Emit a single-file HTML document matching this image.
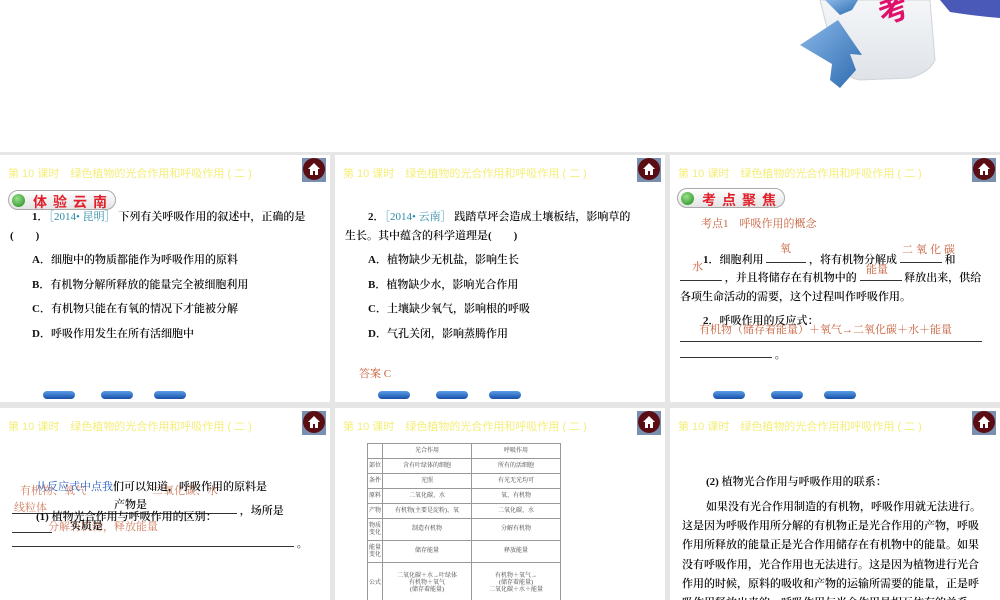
<!DOCTYPE html>
<html><head><meta charset="utf-8"><style>
body{margin:0;width:1000px;height:600px;position:relative;overflow:hidden;background:#fff;font-family:"Liberation Serif","Noto Serif CJK SC","Noto Sans CJK SC",serif;}
.bg{position:absolute;left:0;top:152px;width:1000px;height:448px;background:#e6e6e6;}
.p{position:absolute;background:#fff;overflow:hidden;}
.t{position:absolute;left:8px;top:10px;font:11px "Liberation Sans","Noto Sans CJK SC",sans-serif;color:#f4ee7a;white-space:nowrap;}
.h{position:absolute;right:4px;top:3px;width:24px;height:24px;background:#7a8fb0;}
.h:before{content:"";position:absolute;left:1px;top:0;width:22px;height:22px;border-radius:50%;background:#5a0e14;}
.h svg{position:absolute;left:5px;top:4px;}
.x{position:absolute;font-size:11px;color:#111;white-space:nowrap;font-weight:600;}
.r{color:#c8603c;font-weight:normal;}
.c{color:#2a8aa8;font-weight:normal;}
.nav{position:absolute;top:236px;width:32px;height:8px;border-radius:4px;background:linear-gradient(#5a9ee8,#1a4fa8);}
.badge{position:absolute;left:8px;top:35px;width:106px;height:18px;border:1px solid #aaa;border-radius:10px;background:linear-gradient(#fff,#e4e4e4);}
.badge i{position:absolute;left:3px;top:3px;width:13px;height:13px;border-radius:50%;background:radial-gradient(circle at 40% 35%,#9be08a,#1b8a1b);}
.badge b{position:absolute;left:24px;top:1px;font:bold 14px "Noto Sans CJK SC",sans-serif;color:#e0202a;letter-spacing:6px;}
.u{display:inline-block;border-bottom:1px solid #333;height:10px;vertical-align:baseline;}
table{border-collapse:collapse;font-size:6px;color:#444;table-layout:fixed;}
td{border:1px solid #999;text-align:center;padding:0;height:14px;line-height:7px;overflow:hidden;}
</style></head><body>
<svg style="position:absolute;left:760px;top:0" width="240" height="110">
<defs><linearGradient id="g" x1="0" y1="0" x2="0" y2="1"><stop offset="0" stop-color="#f4f6f8"/><stop offset="1" stop-color="#dfe3e8"/></linearGradient>
<linearGradient id="b" x1="0" y1="0" x2="1" y2="1"><stop offset="0" stop-color="#8ab8e8"/><stop offset="1" stop-color="#2e6bb0"/></linearGradient></defs>
<path d="M60 0 L170 0 L175 60 Q170 72 150 78 L100 80 Q85 78 75 60 Z" fill="url(#g)" stroke="#d0d4d8"/>
<path d="M65 0 L98 0 L92 10 L80 15 Z" fill="url(#b)"/>
<path d="M180 0 L240 0 L240 18 Q215 16 190 12 Z" fill="#4a58b8"/>
<path d="M40 45 L78 20 L102 55 L90 54 L96 70 L80 88 L70 80 L72 64 Z" fill="url(#b)"/>
<text x="118" y="22" font-family="Noto Sans CJK SC,sans-serif" font-weight="bold" font-size="30" fill="#e0106a" transform="rotate(-20 128 10)">考</text>
</svg>
<div class="bg"></div>

<div class="p" style="left:0;top:155px;width:330px;height:247px">
<div class="t">第 10 课时　绿色植物的光合作用和呼吸作用 ( 二 )</div>
<div class="h"><svg width="14" height="14" viewBox="0 0 14 14"><path d="M7 1 L1 7 H3 V13 H6 V9 H8 V13 H11 V7 H13 Z" fill="#fff"/></svg></div>
<div class="badge"><i></i><b>体验云南</b></div>
<div class="x" style="left:32px;top:53px">1．<span class="c">［2014• 昆明］</span> 下列有关呼吸作用的叙述中，正确的是</div>
<div class="x" style="left:10px;top:72px">(　　)</div>
<div class="x" style="left:32px;top:96px">A．细胞中的物质都能作为呼吸作用的原料</div>
<div class="x" style="left:32px;top:121px">B．有机物分解所释放的能量完全被细胞利用</div>
<div class="x" style="left:32px;top:145px">C．有机物只能在有氧的情况下才能被分解</div>
<div class="x" style="left:32px;top:170px">D．呼吸作用发生在所有活细胞中</div>
<div class="nav" style="left:43px"></div><div class="nav" style="left:101px"></div><div class="nav" style="left:154px"></div>
</div>

<div class="p" style="left:335px;top:155px;width:330px;height:247px">
<div class="t">第 10 课时　绿色植物的光合作用和呼吸作用 ( 二 )</div>
<div class="h"><svg width="14" height="14" viewBox="0 0 14 14"><path d="M7 1 L1 7 H3 V13 H6 V9 H8 V13 H11 V7 H13 Z" fill="#fff"/></svg></div>
<div class="x" style="left:33px;top:53px"><b>2</b>．<span class="c">［2014• 云南］</span> 践踏草坪会造成土壤板结，影响草的</div>
<div class="x" style="left:10px;top:72px">生长。其中蕴含的科学道理是(　　)</div>
<div class="x" style="left:33px;top:96px">A．植物缺少无机盐，影响生长</div>
<div class="x" style="left:33px;top:121px">B．植物缺少水，影响光合作用</div>
<div class="x" style="left:33px;top:145px">C．土壤缺少氧气，影响根的呼吸</div>
<div class="x" style="left:33px;top:170px">D．气孔关闭，影响蒸腾作用</div>
<div class="x r" style="left:24px;top:210px">答案 C</div>
<div class="nav" style="left:43px"></div><div class="nav" style="left:101px"></div><div class="nav" style="left:154px"></div>
</div>

<div class="p" style="left:670px;top:155px;width:330px;height:247px">
<div class="t">第 10 课时　绿色植物的光合作用和呼吸作用 ( 二 )</div>
<div class="h"><svg width="14" height="14" viewBox="0 0 14 14"><path d="M7 1 L1 7 H3 V13 H6 V9 H8 V13 H11 V7 H13 Z" fill="#fff"/></svg></div>
<div class="badge" style="left:7px;top:33px"><i></i><b>考点聚焦</b></div>
<div class="x r" style="left:31px;top:60px">考点1　呼吸作用的概念</div>
<div class="x r" style="left:110px;top:85px">氧</div>
<div class="x r" style="left:232px;top:86px;letter-spacing:3px">二氧化碳</div>
<div class="x" style="left:33px;top:96px">1．细胞利用 <span class="u" style="width:40px"></span> ，将有机物分解成 <span class="u" style="width:42px"></span> 和</div>
<div class="x r" style="left:22px;top:103px">水</div>
<div class="x r" style="left:196px;top:106px">能量</div>
<div class="x" style="left:10px;top:114px"><span class="u" style="width:42px"></span> ，并且将储存在有机物中的 <span class="u" style="width:42px"></span> 释放出来，供给</div>
<div class="x" style="left:10px;top:133px">各项生命活动的需要，这个过程叫作呼吸作用。</div>
<div class="x" style="left:33px;top:157px">2．呼吸作用的反应式：</div>
<div class="x r" style="left:29px;top:166px">有机物（储存着能量）＋氧气→二氧化碳＋水＋能量</div>
<div style="position:absolute;left:10px;top:186px;width:302px;border-top:1px solid #333"></div>
<div class="x" style="left:10px;top:191px"><span class="u" style="width:92px"></span> 。</div>
<div class="nav" style="left:43px"></div><div class="nav" style="left:101px"></div><div class="nav" style="left:154px"></div>
</div>

<div class="p" style="left:0;top:408px;width:330px;height:192px">
<div class="t">第 10 课时　绿色植物的光合作用和呼吸作用 ( 二 )</div>
<div class="h"><svg width="14" height="14" viewBox="0 0 14 14"><path d="M7 1 L1 7 H3 V13 H6 V9 H8 V13 H11 V7 H13 Z" fill="#fff"/></svg></div>
<div class="x r" style="left:20px;top:74px;opacity:.8">有机物、氧气　　　　　　二氧化碳、水</div>
<div class="x" style="left:36px;top:70px"><span style="color:#2a60c0;font-weight:normal">从反应式中点我</span>们可以知道，呼吸作用的原料是</div>
<div class="x r" style="left:14px;top:91px;opacity:.8">线粒体</div>
<div class="x" style="left:114px;top:88px">产物是</div>
<div class="x" style="left:12px;top:94px"><span class="u" style="width:225px"></span> ，场所是</div>
<div class="x" style="left:36px;top:100px">(1) 植物光合作用与呼吸作用的区别：</div>
<div class="x r" style="left:48px;top:110px;opacity:.8">分解有机物，释放能量</div>
<div class="x" style="left:70px;top:109px">实质是</div>
<div style="position:absolute;left:12px;top:124px;width:40px;border-top:1px solid #333"></div>
<div class="x" style="left:12px;top:127px"><span class="u" style="width:282px"></span> 。</div>
</div>

<div class="p" style="left:335px;top:408px;width:330px;height:192px">
<div class="t">第 10 课时　绿色植物的光合作用和呼吸作用 ( 二 )</div>
<div class="h"><svg width="14" height="14" viewBox="0 0 14 14"><path d="M7 1 L1 7 H3 V13 H6 V9 H8 V13 H11 V7 H13 Z" fill="#fff"/></svg></div>
<table style="position:absolute;left:32px;top:35px;width:193px">
<colgroup><col style="width:15px"><col style="width:89px"><col style="width:89px"></colgroup>
<tr><td></td><td>光合作用</td><td>呼吸作用</td></tr>
<tr><td>部位</td><td>含有叶绿体的细胞</td><td>所有的活细胞</td></tr>
<tr><td>条件</td><td>光照</td><td>有光无光均可</td></tr>
<tr><td>原料</td><td>二氧化碳、水</td><td>氧、有机物</td></tr>
<tr><td>产物</td><td>有机物(主要是淀粉)、氧</td><td>二氧化碳、水</td></tr>
<tr><td style="height:21px">物质<br>变化</td><td>制造有机物</td><td>分解有机物</td></tr>
<tr><td style="height:21px">能量<br>变化</td><td>储存能量</td><td>释放能量</td></tr>
<tr><td style="height:40px">公式</td><td>二氧化碳＋水→叶绿体<br>有机物＋氧气<br>(储存着能量)</td><td>有机物＋氧气→<br>(储存着能量)<br>二氧化碳＋水＋能量</td></tr>
</table>
</div>

<div class="p" style="left:670px;top:408px;width:330px;height:192px">
<div class="t">第 10 课时　绿色植物的光合作用和呼吸作用 ( 二 )</div>
<div class="h"><svg width="14" height="14" viewBox="0 0 14 14"><path d="M7 1 L1 7 H3 V13 H6 V9 H8 V13 H11 V7 H13 Z" fill="#fff"/></svg></div>
<div class="x" style="left:36px;top:65px">(2) 植物光合作用与呼吸作用的联系：</div>
<div class="x" style="left:36px;top:90px">如果没有光合作用制造的有机物，呼吸作用就无法进行。</div>
<div class="x" style="left:12px;top:109px">这是因为呼吸作用所分解的有机物正是光合作用的产物，呼吸</div>
<div class="x" style="left:12px;top:128px">作用所释放的能量正是光合作用储存在有机物中的能量。如果</div>
<div class="x" style="left:12px;top:148px">没有呼吸作用，光合作用也无法进行。这是因为植物进行光合</div>
<div class="x" style="left:12px;top:167px">作用的时候，原料的吸收和产物的运输所需要的能量，正是呼</div>
<div class="x" style="left:12px;top:186px">吸作用释放出来的。呼吸作用与光合作用是相互依存的关系。</div>
</div>
</body></html>
